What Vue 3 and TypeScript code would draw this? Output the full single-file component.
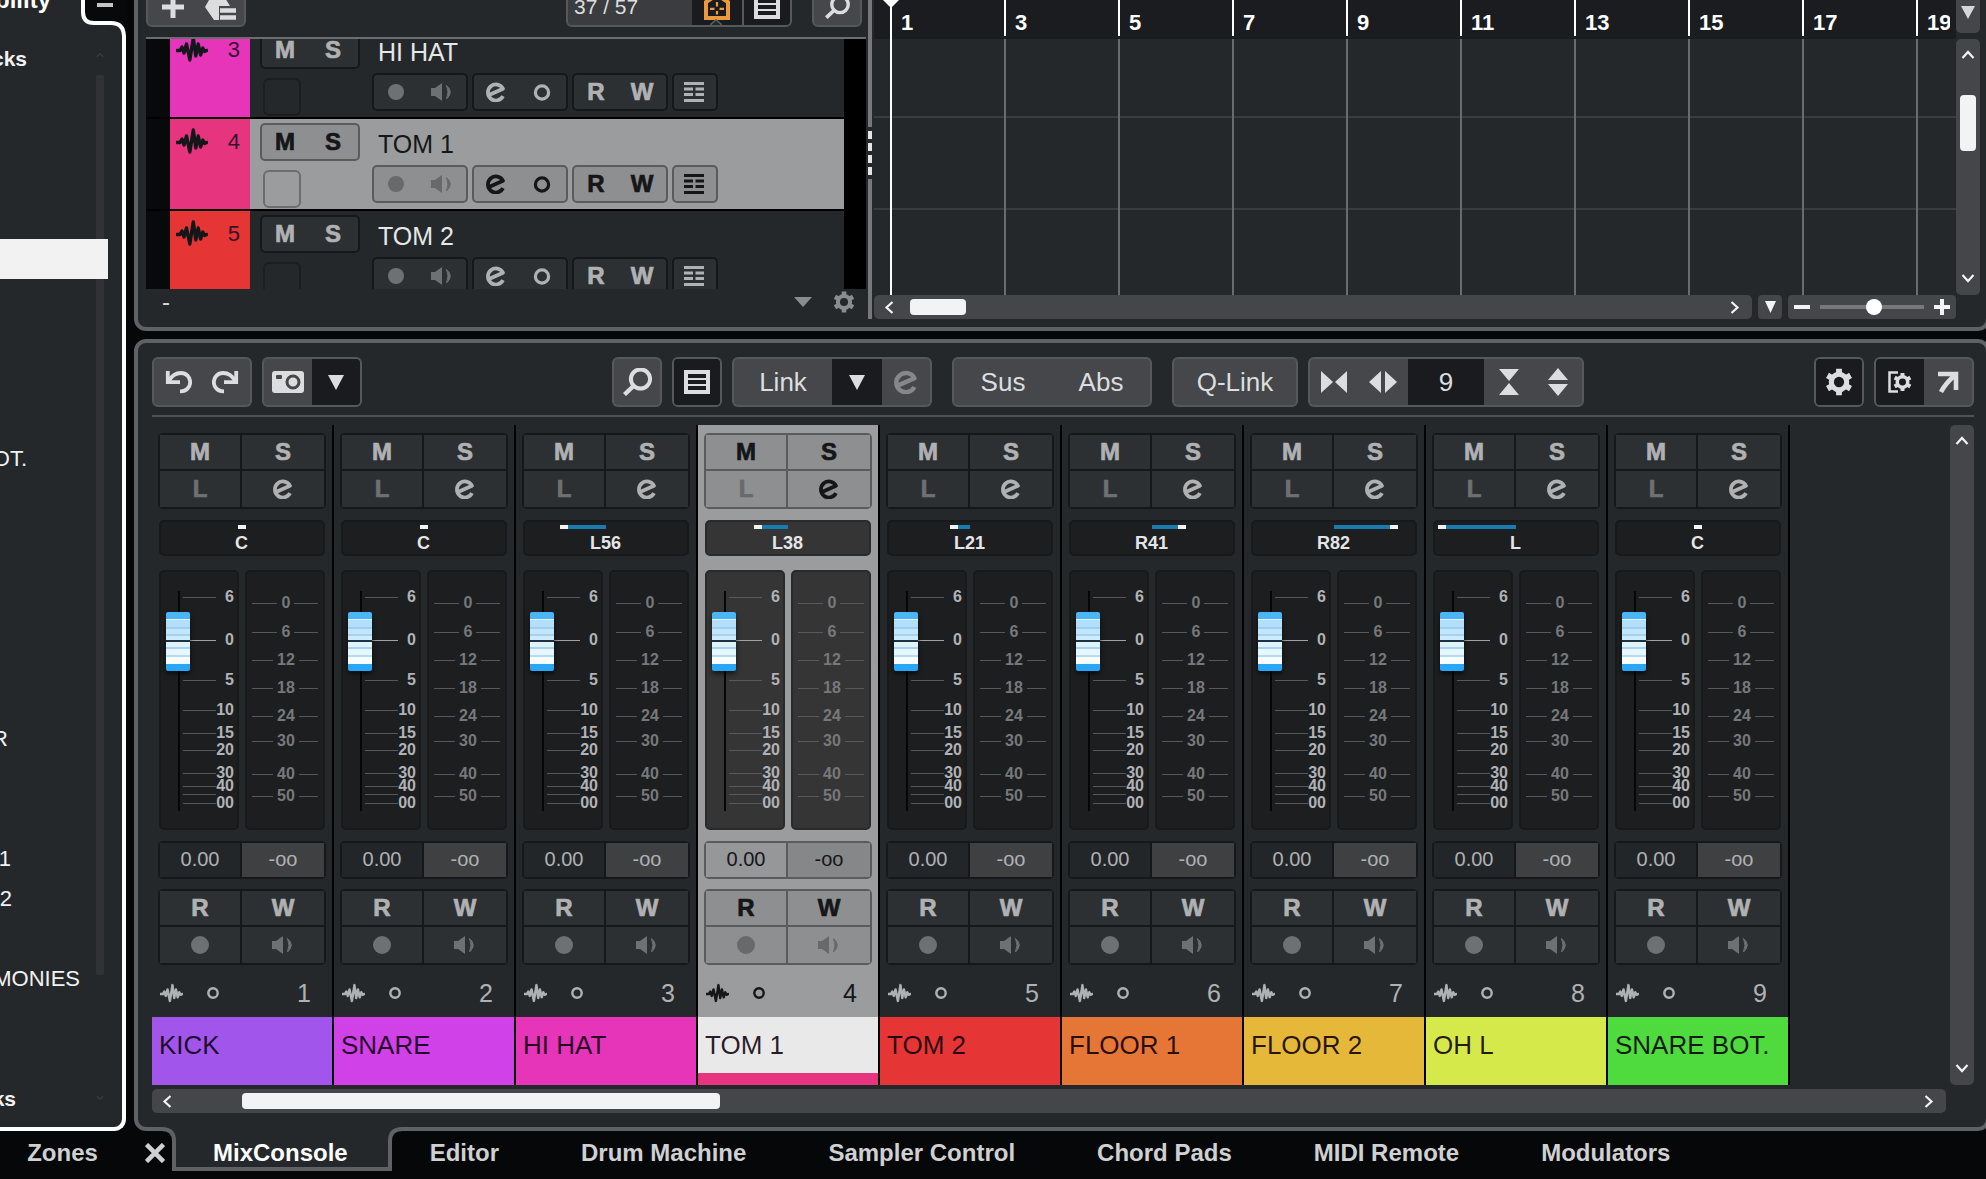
<script setup lang="ts">
import { ref } from 'vue'

interface Channel {
  id: number
  name: string
  color: string
  pan: string
  panAt: number
}

const channels: Channel[] = [
  { id: 1, name: 'KICK', color: '#a155ea', pan: 'C', panAt: 0 },
  { id: 2, name: 'SNARE', color: '#d041e7', pan: 'C', panAt: 0 },
  { id: 3, name: 'HI HAT', color: '#e735ba', pan: 'L56', panAt: -42 },
  { id: 4, name: 'TOM 1', color: '#e6357e', pan: 'L38', panAt: -30 },
  { id: 5, name: 'TOM 2', color: '#e63535', pan: 'L21', panAt: -16 },
  { id: 6, name: 'FLOOR 1', color: '#e57635', pan: 'R41', panAt: 30 },
  { id: 7, name: 'FLOOR 2', color: '#e5b83a', pan: 'R82', panAt: 60 },
  { id: 8, name: 'OH L', color: '#d6e94b', pan: 'L', panAt: -74 },
  { id: 9, name: 'SNARE BOT.', color: '#4fda3e', pan: 'C', panAt: 0 },
]
const tracks = channels.slice(2, 5)
const selected = ref(4)
const zoom = ref(52)
const levels = ref<number[]>(channels.map(() => 869))

/* Pan indicator geometry, measured from the centre of the 162px wide field */
const panCenter = 81
function panBar(c: Channel) {
  return { left: `${panCenter + Math.min(0, c.panAt)}px`, width: `${Math.abs(c.panAt)}px` }
}
function panKnob(c: Channel) {
  return { left: `${panCenter + c.panAt - 4}px` }
}

const faderTicks = [
  { y: 25, t: '6' }, { y: 68, t: '0' }, { y: 108, t: '5' }, { y: 138, t: '10' },
  { y: 161, t: '15' }, { y: 178, t: '20' }, { y: 201, t: '30' }, { y: 214, t: '40' },
  { y: 222, t: '' }, { y: 231, t: '00' },
]
const meterTicks = [
  { y: 31, t: '0' }, { y: 60, t: '6' }, { y: 88, t: '12' }, { y: 116, t: '18' },
  { y: 144, t: '24' }, { y: 169, t: '30' }, { y: 202, t: '40' }, { y: 224, t: '50' },
]

const bars = [1, 3, 5, 7, 9, 11, 13, 15, 17, 19]

/* Sidebar rows; "end" is where the scrolled text stops */
const rowCount = 27
const rowText: Record<number, { text: string; end: number; strong?: boolean }> = {
  0: { text: 'cks', end: 27, strong: true },
  10: { text: 'OT.', end: 27 },
  17: { text: 'R', end: 8 },
  20: { text: '1', end: 11 },
  21: { text: '2', end: 12 },
  23: { text: 'MONIES', end: 80 },
  26: { text: 'ks', end: 16, strong: true },
}
const tabs = ['MixConsole', 'Editor', 'Drum Machine', 'Sampler Control', 'Chord Pads', 'MIDI Remote', 'Modulators']
const activeTab = ref('MixConsole')
</script>

<template>
  <div class="app">
    <svg class="defs" aria-hidden="true">
      <defs>
        <symbol id="i-e" viewBox="0 0 20 20">
          <path d="M3 13 L17 6.800 A8 8 0 1 0 17 14.200" fill="none" stroke="currentColor" stroke-width="3.700" stroke-linejoin="round" />
        </symbol>
        <symbol id="i-wave" viewBox="0 0 32 26">
          <path d="M0 14.5 H4 L6 11 L8 17 L10.5 8 L13.800 24 L17.300 2 L19.800 20 L22.200 8 L24.600 19 L26.800 12 L28.600 15.5 L32 14" fill="none" stroke="currentColor" stroke-width="3.400" stroke-linejoin="round" />
        </symbol>
        <symbol id="i-speaker" viewBox="0 0 22 20">
          <path d="M0 6 H4 L11 1 V19 L4 14 H0 Z" fill="currentColor" />
          <path d="M15.500 3.500 Q23 10 15.500 17 Q18.500 10 15.500 3.500 Z" fill="currentColor" stroke="currentColor" stroke-width="1" />
        </symbol>
        <symbol id="i-dot" viewBox="0 0 18 18"><circle cx="9" cy="9" r="9" fill="currentColor" /></symbol>
        <symbol id="i-gear" viewBox="0 0 24 24">
          <circle cx="12" cy="12" r="6.6" fill="none" stroke="currentColor" stroke-width="4.4" />
          <g stroke="currentColor" stroke-width="5">
            <path d="M12 0.6 V5 M12 19 V23.4" />
            <path d="M12 0.6 V5 M12 19 V23.4" transform="rotate(60 12 12)" />
            <path d="M12 0.6 V5 M12 19 V23.4" transform="rotate(120 12 12)" />
          </g>
        </symbol>
        <symbol id="i-search" viewBox="0 0 30 28">
          <circle cx="18.5" cy="11" r="9.6" fill="none" stroke="currentColor" stroke-width="4" />
          <path d="M12 17.5 L2.5 26.5" fill="none" stroke="currentColor" stroke-width="4.4" />
        </symbol>
        <symbol id="i-list" viewBox="0 0 26 24">
          <path fill="currentColor" fill-rule="evenodd" d="M0 0 H26 V24 H0 Z M4 4 V8 H22 V4 Z M4 10 V14 H22 V10 Z M4 16 V20 H22 V16 Z" />
        </symbol>
        <symbol id="i-lanes" viewBox="0 0 20 20">
          <path fill="currentColor" d="M0 0 H20 V3 H0 Z M0 5.5 H9 V8.5 H0 Z M11.5 5.5 H20 V8.5 H11.5 Z M0 11 H9 V14 H0 Z M11.5 11 H20 V14 H11.5 Z M0 17 H20 V20 H0 Z" />
        </symbol>
        <symbol id="i-down" viewBox="0 0 16 15"><path d="M0 0 H16 L8 15 Z" fill="currentColor" /></symbol>
        <symbol id="i-chev" viewBox="0 0 14 9"><path d="M1.5 8 L7 2 L12.5 8" fill="none" stroke="currentColor" stroke-width="2.2" /></symbol>
        <symbol id="i-undo" viewBox="0 0 28 24">
          <path d="M3.800 1 V12.200 H16" fill="none" stroke="currentColor" stroke-width="3.800" />
          <path d="M4.500 11.500 Q9 3 17 3 A9.200 9.200 0 0 1 17 21.400 H16" fill="none" stroke="currentColor" stroke-width="3.800" />
        </symbol>
      </defs>
    </svg>

    <div class="workspace">
      <aside class="sidebar">
        <header class="side-head">
          <span class="side-title">bility</span>
          <svg class="side-notch" width="45" height="36" viewBox="0 0 45 36">
            <path d="M2 0 V12 Q2 23 13 23 H30 Q43 23 43 36 H45 V0 Z" fill="#08090a" />
            <path d="M2 0 V12 Q2 23 13 23 H30 Q43 23 43 37" fill="none" stroke="#fff" stroke-width="4" />
            <rect x="16" y="3" width="16" height="4" fill="#c4c5c7" />
          </svg>
        </header>
        <div class="side-body">
          <ul class="side-list">
            <li v-for="n in rowCount" :key="n" :class="{ on: n === 6 }">
              <span
                v-if="rowText[n - 1]"
                :class="{ strong: rowText[n - 1].strong }"
                :style="{ width: rowText[n - 1].end + 'px' }"
              >{{ rowText[n - 1].text }}</span>
            </li>
          </ul>
          <div class="side-scroll">
            <svg width="8" height="6"><use href="#i-chev" /></svg>
            <i></i>
            <svg class="flip" width="8" height="6"><use href="#i-chev" /></svg>
          </div>
        </div>
      </aside>

      <main class="main">
        <section class="panel project">
          <div class="tracks">
            <div class="track-tools">
              <div class="group">
                <button class="w50" aria-label="Add track">
                  <svg width="22" height="22" viewBox="0 0 22 22"><path d="M11 0 V22 M0 11 H22" stroke="currentColor" stroke-width="5" /></svg>
                </button>
                <button class="w46" aria-label="Track preset">
                  <svg width="32" height="28" viewBox="0 0 32 28">
                    <path d="M8 0 H17 L25 13 H14 V27 H9 L0 14 Z" fill="currentColor" />
                    <path d="M15 17.500 H31 M15 24.500 H31" stroke="currentColor" stroke-width="4.500" />
                  </svg>
                </button>
              </div>
              <span class="spacer"></span>
              <div class="group">
                <span class="counter">37 / 57</span>
                <button class="dark w50 house" aria-label="Show visible tracks">
                  <svg width="26" height="26" viewBox="0 0 26 26">
                    <path d="M2 24 V8 L13 1 L24 8 V24 Z" fill="none" stroke="currentColor" stroke-width="4" />
                    <path d="M13 8 V12.500 M13 17 V20.500 M6 14.800 H10.500 M15.500 14.800 H20" stroke="currentColor" stroke-width="2.200" />
                  </svg>
                  <svg class="tick" width="12" height="6" viewBox="0 0 12 6"><path d="M1 6 L6 1 L11 6 Z" fill="#25282b" /><path d="M0 6 L6 0.800 L12 6" fill="none" stroke="#595b5e" stroke-width="1.600" /></svg>
                </button>
                <button class="dark w48 split" aria-label="Track list"><svg width="26" height="24"><use href="#i-list" /></svg></button>
              </div>
              <div class="group search-top">
                <button class="w46" aria-label="Find track"><svg width="26" height="24"><use href="#i-search" /></svg></button>
              </div>
            </div>

            <div class="track-list">
              <div v-for="t in tracks" :key="t.id" class="track" :class="{ sel: t.id === selected }">
                <div class="track-color" :style="{ background: t.color }">
                  <svg width="32" height="26"><use href="#i-wave" /></svg>
                  <span>{{ t.id }}</span>
                </div>
                <div class="track-left">
                  <div class="mini"><button class="b50">M</button><button class="b50">S</button></div>
                  <span class="slot"></span>
                </div>
                <div class="track-right">
                  <div class="track-name">{{ t.name }}</div>
                  <div class="mini-row">
                    <div class="mini dim">
                      <button aria-label="Record"><svg width="16" height="16"><use href="#i-dot" /></svg></button>
                      <button aria-label="Monitor"><svg width="22" height="20"><use href="#i-speaker" /></svg></button>
                    </div>
                    <div class="mini">
                      <button aria-label="Edit channel"><svg width="20" height="20"><use href="#i-e" /></svg></button>
                      <button aria-label="Freeze"><svg width="18" height="18" viewBox="0 0 18 18"><circle cx="9" cy="9.500" r="6.600" fill="none" stroke="currentColor" stroke-width="3.200" /></svg></button>
                    </div>
                    <div class="mini"><button>R</button><button>W</button></div>
                    <div class="mini"><button class="b46" aria-label="Lanes"><svg width="20" height="20"><use href="#i-lanes" /></svg></button></div>
                  </div>
                </div>
              </div>
            </div>

            <div class="track-foot">
              <span class="dash">-</span>
              <span class="spacer"></span>
              <svg width="18" height="10" viewBox="0 0 18 10"><path d="M0 0 H18 L9 10 Z" fill="currentColor" /></svg>
              <svg width="22" height="22"><use href="#i-gear" /></svg>
            </div>
          </div>

          <div class="splitter"><div class="grip"><i></i><i></i><i></i><i></i></div></div>

          <div class="timeline">
            <div class="ruler">
              <span v-for="b in bars" :key="b" class="bar">{{ b }}</span>
            </div>
            <button class="drop-top" aria-label="Ruler options"><svg width="14" height="15"><use href="#i-down" /></svg></button>
            <div class="lanes"></div>
            <div class="vscroll">
              <svg width="14" height="9"><use href="#i-chev" /></svg>
              <i></i>
              <svg class="flip" width="14" height="9"><use href="#i-chev" /></svg>
            </div>
            <div class="time-foot">
              <div class="hscroll">
                <svg class="left" width="14" height="9"><use href="#i-chev" /></svg>
                <i class="short"></i>
                <span class="spacer"></span>
                <svg class="right" width="14" height="9"><use href="#i-chev" /></svg>
              </div>
              <button class="drop" aria-label="Zoom presets"><svg width="11" height="12" viewBox="0 0 11 12"><path d="M0 0 H11 L5.500 12 Z" fill="currentColor" /></svg></button>
              <div class="zoom">
                <svg width="16" height="16" viewBox="0 0 16 16"><path d="M0 8 H16" stroke="currentColor" stroke-width="4" /></svg>
                <input v-model="zoom" type="range" min="0" max="100" aria-label="Horizontal zoom" />
                <svg width="16" height="16" viewBox="0 0 16 16"><path d="M0 8 H16 M8 0 V16" stroke="currentColor" stroke-width="4" /></svg>
              </div>
            </div>
            <div class="playhead"></div>
          </div>
        </section>

        <section class="panel mixer">
          <div class="mix-tools">
            <div class="group g-undo">
              <button aria-label="Undo"><svg width="28" height="24"><use href="#i-undo" /></svg></button>
              <button aria-label="Redo"><svg class="mirror" width="28" height="24"><use href="#i-undo" /></svg></button>
            </div>
            <div class="group g-snap">
              <button aria-label="Snapshot">
                <svg width="32" height="22" viewBox="0 0 32 22">
                  <rect width="32" height="22" rx="3" fill="currentColor" />
                  <rect x="4" y="4" width="6" height="4" rx="1" fill="#45474a" />
                  <circle cx="21" cy="11" r="6" fill="none" stroke="#45474a" stroke-width="3" />
                </svg>
              </button>
              <button class="dark" aria-label="Snapshot list"><svg width="16" height="15"><use href="#i-down" /></svg></button>
            </div>
            <div class="group g-one"><button aria-label="Find channel"><svg width="30" height="28"><use href="#i-search" /></svg></button></div>
            <div class="group g-one"><button class="dark" aria-label="Channel list"><svg width="26" height="24"><use href="#i-list" /></svg></button></div>
            <div class="group g-link">
              <button class="grow">Link</button>
              <button class="dark w50" aria-label="Link options"><svg width="16" height="15"><use href="#i-down" /></svg></button>
              <button class="off w50" aria-label="Edit link"><svg width="24" height="24"><use href="#i-e" /></svg></button>
            </div>
            <div class="group g-abs"><button>Sus</button><button>Abs</button></div>
            <div class="group g-q"><button>Q-Link</button></div>
            <div class="group g-width">
              <button class="w50" aria-label="Narrower"><svg width="26" height="22" viewBox="0 0 26 22"><path d="M0 0 L12 11 L0 22 Z M26 0 L14 11 L26 22 Z" fill="currentColor" /></svg></button>
              <button class="w50" aria-label="Wider"><svg width="28" height="22" viewBox="0 0 28 22"><path d="M12 0 L0 11 L12 22 Z M16 0 L28 11 L16 22 Z" fill="currentColor" /></svg></button>
              <button class="dark grow">9</button>
              <button class="w50" aria-label="Lower"><svg width="20" height="26" viewBox="0 0 20 26"><path d="M0 0 H20 L10 12 Z M0 26 H20 L10 14 Z" fill="currentColor" /></svg></button>
              <button class="w50" aria-label="Higher"><svg width="20" height="28" viewBox="0 0 20 28"><path d="M0 12 H20 L10 0 Z M0 16 H20 L10 28 Z" fill="currentColor" /></svg></button>
            </div>
            <span class="spacer"></span>
            <div class="group g-one"><button class="dark" aria-label="Settings"><svg width="28" height="28"><use href="#i-gear" /></svg></button></div>
            <div class="group g-open">
              <button class="dark" aria-label="Panel setup">
                <svg width="26" height="22" viewBox="0 0 26 22">
                  <path d="M11 1.500 H2.500 V20.500 H11" fill="none" stroke="currentColor" stroke-width="2.500" />
                  <svg x="6" y="1.500" width="19" height="19"><use href="#i-gear" /></svg>
                </svg>
              </button>
              <button aria-label="Open in window">
                <svg width="22" height="22" viewBox="0 0 22 22">
                  <path d="M1 3 H19 V19 M18 4 Q8 13 4 21" fill="none" stroke="currentColor" stroke-width="4.600" />
                </svg>
              </button>
            </div>
          </div>

          <div class="mix-body">
            <div class="strips">
              <article v-for="(c, i) in channels" :key="c.id" class="strip" :class="{ sel: c.id === selected }" @click="selected = c.id">
                <div class="quad">
                  <button>M</button><button>S</button>
                  <button class="faint">L</button>
                  <button aria-label="Edit channel"><svg width="20" height="20"><use href="#i-e" /></svg></button>
                </div>
                <div class="pan">
                  <div class="pan-track">
                    <i class="pan-bar" :style="panBar(c)"></i>
                    <i class="pan-knob" :style="panKnob(c)"></i>
                  </div>
                  <span>{{ c.pan }}</span>
                </div>
                <div class="levels">
                  <div class="well">
                    <svg width="76" height="256" viewBox="0 0 76 256">
                      <rect x="17" y="19" width="2" height="220" fill="#050607" />
                      <g v-for="t in faderTicks" :key="t.y">
                        <path :d="`M22 ${t.y + 0.5} H55`" :stroke="t.t === '0' ? '#a0a2a4' : '#56585a'" />
                        <text x="73" :y="t.y + 5" text-anchor="end" class="scale">{{ t.t }}</text>
                      </g>
                    </svg>
                    <input v-model="levels[i]" class="fader" type="range" min="0" max="1000" :aria-label="c.name + ' level'" />
                  </div>
                  <div class="well">
                    <svg width="76" height="256" viewBox="0 0 76 256">
                      <g v-for="t in meterTicks" :key="t.y">
                        <path :d="t.t.length > 1 ? `M5 ${t.y + 0.5} H26 M52 ${t.y + 0.5} H71` : `M5 ${t.y + 0.5} H30 M47 ${t.y + 0.5} H71`" stroke="#56585a" />
                        <text x="39" :y="t.y + 5" text-anchor="middle" class="scale low">{{ t.t }}</text>
                      </g>
                    </svg>
                  </div>
                </div>
                <div class="quad vals"><span>0.00</span><span class="peak">-oo</span></div>
                <div class="quad">
                  <button>R</button><button>W</button>
                  <button class="faint" aria-label="Record"><svg width="18" height="18"><use href="#i-dot" /></svg></button>
                  <button class="faint" aria-label="Monitor"><svg width="22" height="20"><use href="#i-speaker" /></svg></button>
                </div>
                <div class="info">
                  <svg width="23" height="20"><use href="#i-wave" /></svg>
                  <svg width="12" height="12" viewBox="0 0 12 12"><circle cx="6" cy="6" r="4.700" fill="none" stroke="currentColor" stroke-width="2.400" /></svg>
                  <span>{{ c.id }}</span>
                </div>
                <div class="name" :style="{ background: c.color }"><span>{{ c.name }}</span></div>
              </article>
            </div>
            <div class="vscroll mix-v">
              <svg width="14" height="9"><use href="#i-chev" /></svg>
              <span class="spacer"></span>
              <svg class="flip" width="14" height="9"><use href="#i-chev" /></svg>
            </div>
          </div>

          <div class="hscroll mix-h">
            <svg class="left" width="14" height="9"><use href="#i-chev" /></svg>
            <i class="long"></i>
            <span class="spacer"></span>
            <svg class="right" width="14" height="9"><use href="#i-chev" /></svg>
          </div>
        </section>
      </main>
    </div>

    <footer class="tabs">
      <button class="zones">Zones</button>
      <button class="close" aria-label="Close lower zone">
        <svg width="20" height="20" viewBox="0 0 20 20"><path d="M1.500 1.500 L18.500 18.500 M18.500 1.500 L1.500 18.500" stroke="currentColor" stroke-width="4.600" /></svg>
      </button>
      <button v-for="t in tabs" :key="t" :class="{ active: t === activeTab }" @click="activeTab = t">
        <svg v-if="t === activeTab" class="tab-shape" width="240" height="44" viewBox="0 0 240 44">
          <path d="M0 0 H240 V2 Q228 2 228 14 V42 H12 V14 Q12 2 0 2 Z" fill="#25282b" />
          <path d="M0 2 Q12 2 12 14 V42 H228 V14 Q228 2 240 2" fill="none" stroke="#5f6164" stroke-width="4" />
        </svg>
        <span>{{ t }}</span>
      </button>
    </footer>
  </div>
</template>

<style>
html, body { background: #060709; overflow: hidden; }
</style>

<style scoped>
.app {
  min-height: 100vh;
  overflow: hidden;
  background: #060709;
  color: #d6d7d9;
  font-family: "Liberation Sans", Arial, sans-serif;
  font-size: 24px;
}
.app *, .app *::before { box-sizing: border-box; }
.defs { position: absolute; width: 0; height: 0; }
svg { display: block; flex: none; }
button {
  display: flex; align-items: center; justify-content: center;
  margin: 0; padding: 0; border: 0; background: none; color: inherit; font: inherit;
}
.spacer { flex: 1; }
.flip { transform: rotate(180deg); }
.mirror { transform: scaleX(-1); }
.left { transform: rotate(-90deg); }
.right { transform: rotate(90deg); }
.workspace { display: flex; gap: 8px; }

/* Sidebar */
.sidebar { width: 126px; display: flex; flex-direction: column; flex: none; overflow: hidden; }
.side-head { height: 36px; display: flex; background: #25282b; flex: none; }
.side-title { flex: 1; display: flex; justify-content: flex-end; padding-right: 30px; color: #fff; font-weight: 700; line-height: 28px; margin-top: -14px; width: 81px; }
.side-body {
  flex: 1; display: flex; position: relative; padding-top: 3px;
  background: #25282b; border: 4px solid #fff; border-width: 0 4px 4px 0; border-bottom-right-radius: 12px;
}
.side-list { flex: 1; list-style: none; margin: 0; padding: 0; font-size: 22px; line-height: 40px; color: #f2f2f3; }
.side-list li { height: 40px; margin-right: 14px; }
.side-list li.on { background: #f2f2f3; }
.side-list span { display: flex; justify-content: flex-end; white-space: nowrap; }
.side-list .strong { font-weight: 700; font-size: 21px; }
.side-scroll {
  position: absolute; top: 16px; bottom: 26px; right: 18px; width: 8px;
  display: flex; flex-direction: column; color: #3a3c40;
}
.side-scroll i { background: rgba(60, 60, 66, 0.5); height: 900px; margin: 17px 0 auto; border-radius: 2px; }
.on { position: relative; z-index: 1; }

/* Panels */
.main { flex: 1; min-width: 0; margin-right: -4px; display: flex; flex-direction: column; gap: 8px; }
.panel { background: #25282b; border: 4px solid #5f6164; border-radius: 12px; }
.project { display: flex; border-top: 0; border-radius: 0 0 12px 12px; padding: 0 6px 8px 8px; }
.group {
  display: flex; height: 50px; overflow: hidden; flex: none;
  border: 2px solid #56585b; border-radius: 6px; background: #45474a; color: #dcdddf;
}
.dark { background: #1a1b1f; }
.w46 { width: 46px; } .w48 { width: 48px; } .w50 { width: 50px; }

/* Track list */
.tracks { width: 720px; flex: none; }
.track-tools { height: 39px; display: flex; align-items: flex-end; padding-bottom: 10px; border-bottom: 2px solid #6b6e71; }
.track-tools .group button { padding-top: 10px; }
.counter { width: 124px; padding: 14px 0 0 6px; background: #3a3c3f; font-size: 21px; line-height: 28px; }
.house { position: relative; color: #ec9a3e; }
.tick { position: absolute; left: 18px; bottom: 0; }
.split { border-left: 2px solid #56585b; }
.search-top { margin: 0 4px 0 20px; }
.track-list { height: 250px; overflow: hidden; padding-right: 22px; background: #000; }
.track { height: 92px; display: flex; padding-left: 24px; background: #08090a; border-bottom: 2px solid #000; color: #e6e7e9; }
.track:first-child { margin-top: -12px; }
.track-color { width: 80px; display: flex; justify-content: space-between; padding: 9px 10px 0 6px; font-size: 22px; line-height: 28px; color: #34102c; }
.track-color svg { color: #15161a; }
.track-left { width: 122px; padding: 4px 0 0 10px; background: #25282b; }
.track-right { flex: 1; background: #25282b; }
.sel .track-left, .sel .track-right { background: #9b9c9e; color: #151617; }
.slot { display: block; width: 38px; height: 38px; margin: 9px 0 0 3px; border: 2px solid #1b1d1f; border-radius: 6px; }
.sel .slot { border-color: #6c6d6f; }
.track-name { height: 46px; padding: 10px 0 0 6px; font-size: 25px; line-height: 30px; }
.mini-row { display: flex; gap: 4px; }
.mini { display: inline-flex; height: 38px; background: #2d3033; border: 2px solid #15171a; border-radius: 5px; color: #b0b1b3; font-weight: 700; -webkit-text-stroke: 0.7px currentColor; }
.mini.dim { color: #6e7072; }
.mini button { width: 46px; line-height: 32px; padding-right: 2px; }
.mini .b50 { width: 48px; }
.mini .b46 { width: 42px; }
.sel .mini { background: #8e8f91; border-color: #5a5b5d; color: #151617; }
.sel .mini.dim { color: #68696b; }
.track-foot { height: 30px; display: flex; align-items: center; gap: 21px; padding: 0 11px 4px 16px; color: #8a8c8f; }
.dash { color: #d6d7d9; line-height: 30px; }

.splitter { width: 4px; margin: 0 2px; padding-top: 127px; background: #77787b; }
.grip { display: flex; flex-direction: column; gap: 4px; padding: 4px 0; background: #25282b; }
.grip i { height: 8px; background: #e4e5e7; }

/* Timeline */
.timeline { flex: 1; min-width: 0; position: relative; display: grid; grid-template-columns: minmax(0, 1fr) 24px; grid-template-rows: 39px 256px 24px; }
.ruler { display: flex; overflow: hidden; padding-left: 16px; background: #1b1c1f; border-right: 6px solid #1b1c1f; }
.bar { flex: none; width: 114px; height: 36px; padding: 9px 0 0 9px; border-left: 2px solid #fff; color: #fff; font-size: 22px; font-weight: 700; line-height: 28px; }
.drop-top { height: 33px; padding-top: 1px; background: #45464a; border-radius: 0 0 5px 5px; }
.drop-top svg { margin-top: -10px; }
.lanes {
  background-color: #25282b;
  background-image: linear-gradient(90deg, #6a6b6d 2px, transparent 2px), linear-gradient(#3a3d3f 2px, transparent 2px);
  background-size: 114px 100%, 100% 92px;
  background-position: 16px 0, 0 77px;
}
.vscroll { display: flex; flex-direction: column; align-items: center; padding: 11px 0 12px; background: #45464a; border-radius: 5px; color: #f2f3f5; }
.vscroll i { width: 16px; height: 56px; margin: 36px 0 auto; background: #f2f3f5; border-radius: 4px; }
.time-foot { display: flex; gap: 6px; }
.hscroll { flex: 1; display: flex; align-items: center; height: 24px; padding: 0 10px 0 8px; background: #45464a; border-radius: 5px; color: #f2f3f5; }
.hscroll i { height: 16px; background: #f2f3f5; border-radius: 4px; }
.short { width: 56px; margin-left: 14px; }
.drop { width: 24px; background: #45464a; border-radius: 4px; color: #f2f3f5; }
.zoom { width: 168px; display: flex; align-items: center; justify-content: space-between; padding: 0 6px; background: #45464a; border-radius: 4px; color: #f2f3f5; }
.zoom input { appearance: none; width: 104px; height: 16px; margin: 0; background: linear-gradient(#77787b, #77787b) center / 100% 4px no-repeat; }
.zoom input::-webkit-slider-thumb { appearance: none; width: 16px; height: 16px; border-radius: 50%; background: #fff; }
.playhead { position: absolute; left: 16px; top: 0; bottom: 24px; width: 2px; background: #fff; }
.playhead::before { content: ""; position: absolute; left: -7px; top: 0; border: 8px solid transparent; border-top-color: #fff; border-bottom: 0; }

/* Mixer */
.mixer { padding: 14px 12px 14px 14px; }
.mix-tools { display: flex; padding-bottom: 8px; border-bottom: 2px solid #505255; font-size: 26px; }
.mix-tools .group button { flex: 1; }
.mix-tools .group .w50 { flex: none; width: 50px; }
.mix-tools .group .w50:first-child, .mix-tools .group .w50:last-child { width: 48px; }
.g-undo, .g-snap { width: 100px; }
.g-undo { margin-right: 10px; }
.g-snap { margin-right: 250px; }
.g-one { width: 50px; margin-right: 10px; }
.g-link { width: 200px; margin-right: 20px; }
.off { color: #85878a; }
.g-abs { width: 200px; margin-right: 20px; }
.g-q { width: 126px; margin-right: 10px; }
.g-width { width: 276px; }
.g-open { width: 100px; }
.mix-body { display: flex; justify-content: space-between; margin-top: 8px; }
.strips { display: flex; min-width: 0; overflow: hidden; }
.strip { width: 182px; flex: none; padding-top: 8px; border-right: 2px solid #000; color: #b0b1b3; }
.strip.sel { background: #9b9c9e; color: #151617; }
.quad {
  display: grid; grid-template-columns: 80px 82px; grid-template-rows: 34px 36px; gap: 2px; padding: 2px;
  margin: 0 6px; background: #15171a; border-radius: 5px; overflow: hidden; font-weight: 700;
}
.quad > * { background: #2d3033; }
.quad > button { -webkit-text-stroke: 0.7px currentColor; }
.faint { color: #6e7072; }
.sel .quad { background: #5a5b5d; }
.sel .quad > * { background: #8e8f91; }
.sel .faint { color: #68696b; }
.pan { height: 36px; margin: 11px 7px 14px; border: 2px solid #17191b; border-radius: 5px; background: #1c1e20; color: #e4e5e7; text-align: center; font-size: 18px; font-weight: 700; line-height: 20px; padding-top: 3px; }
.pan-track { position: relative; height: 4px; margin-bottom: 4px; }
.pan-bar, .pan-knob { position: absolute; top: 0; height: 4px; }
.pan-bar { background: #1a7bb0; }
.pan-knob { width: 8px; background: #f0f1f3; }
.pan span { display: block; padding-right: 1px; }
.levels { display: flex; gap: 6px; margin: 0 7px 11px; }
.well { position: relative; width: 80px; height: 260px; border: 2px solid #17191b; border-radius: 5px; background: #1c1e20; }
.sel .pan, .sel .well { background: #353535; border-color: #2a2a2b; }
.scale { fill: #b0b2b6; font-size: 16px; font-weight: 700; }
.scale.low { fill: #77787a; }
.fader { appearance: none; position: absolute; left: 5px; top: 19px; width: 24px; height: 220px; margin: 0; background: none; writing-mode: vertical-lr; direction: rtl; }
.fader::-webkit-slider-thumb {
  appearance: none; width: 24px; height: 59px; border-radius: 2px; box-shadow: 0 3px 5px rgba(0, 0, 0, 0.6);
  background: linear-gradient(#4ab6f6 7px, #e8f6ff 7px 8px, #b4dffc 8px 15px, #9dd0ef 15px 17px, #c2e6fd 17px 22px, #a4d3f0 22px 24px, #cfecfe 24px 28px, #20303c 28px 30px, #dff3ff 30px 35px, #a6d3ee 35px 37px, #e8f7ff 37px 43px, #b4dcf2 43px 45px, #f6fcff 45px 52px, #27a7f5 52px);
}
.vals { grid-template-rows: 34px; margin-bottom: 10px; font-size: 20px; font-weight: 400; line-height: 32px; text-align: center; }
.quad.vals > * { background: #232629; }
.quad.vals > .peak { background: #3e4042; }
.sel .quad.vals > * { background: #969799; }
.sel .quad.vals > .peak { background: #868789; }
.info { height: 52px; display: flex; align-items: center; padding: 4px 21px 0 8px; font-size: 25px; }
.info svg + svg { margin-left: 24px; }
.info span { margin-left: auto; }
.name { height: 68px; color: rgba(12, 0, 14, 0.88); font-size: 26px; line-height: 56px; white-space: nowrap; }
.name span { display: block; height: 56px; padding-left: 7px; }
.sel .name span { background: #e9e9e9; }
.mix-v { width: 24px; padding: 11px 0 12px; }
.mix-h { margin: 4px 28px 0 0; }
.long { width: 478px; margin-left: 68px; }

/* Lower tabs */
.tabs { position: relative; display: flex; height: 52px; margin-top: -4px; align-items: flex-start; color: #cfd0d2; font-weight: 700; }
.tabs button { position: relative; height: 44px; padding: 7px 41px 0; white-space: nowrap; flex: none; }
.tabs .zones { width: 134px; padding: 7px 36px 0 27px; }
.tabs .close { width: 38px; padding: 7px 0 0 4px; }
.tabs .active { color: #fff; }
.tabs span { position: relative; }
.tab-shape { position: absolute; left: -10px; top: 0; }
</style>
